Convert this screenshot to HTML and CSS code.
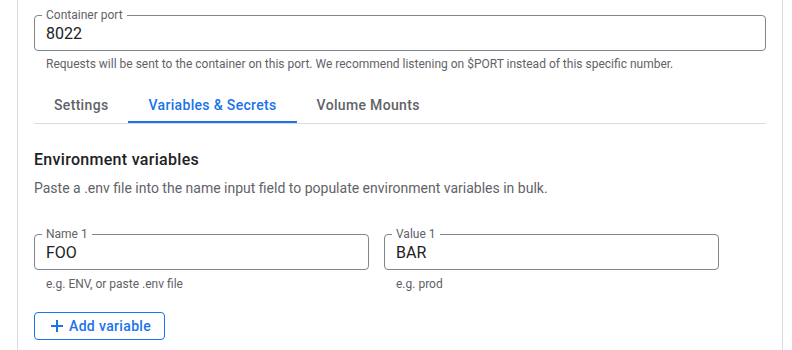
FILE: index.html
```html
<!DOCTYPE html>
<html>
<head>
<meta charset="utf-8">
<link rel="stylesheet" href="styles.css">
</head>
<body>
<div class="panel">
  <div class="field field-port">
    <span class="field-label">Container port</span>
    <span class="field-value">8022</span>
  </div>
  <div class="hint">Requests will be sent to the container on this port. We recommend listening on $PORT instead of this specific number.</div>

  <div class="tabs">
    <div class="tab">Settings</div>
    <div class="tab active">Variables &amp; Secrets</div>
    <div class="tab">Volume Mounts</div>
  </div>

  <h2 class="section-title">Environment variables</h2>
  <p class="section-desc">Paste a .env file into the name input field to populate environment variables in bulk.</p>

  <div class="env-row">
    <div class="env-col">
      <div class="field">
        <span class="field-label">Name 1</span>
        <span class="field-value">FOO</span>
      </div>
      <div class="hint">e.g. ENV, or paste .env file</div>
    </div>
    <div class="env-col">
      <div class="field">
        <span class="field-label">Value 1</span>
        <span class="field-value">BAR</span>
      </div>
      <div class="hint">e.g. prod</div>
    </div>
  </div>

  <button class="add-btn">
    <svg width="12" height="12" viewBox="0 0 12 12" aria-hidden="true"><path d="M6 0v12M0 6h12" stroke="#1a73e8" stroke-width="2" fill="none"/></svg>
    <span>Add variable</span>
  </button>
</div>
</body>
</html>
```

FILE: styles.css
```css
html, body {
  margin: 0;
  padding: 0;
  background: #fff;
  font-family: Roboto, "Liberation Sans", Arial, sans-serif;
  color: #202124;
}

.panel {
  box-sizing: border-box;
  margin-left: 17px;
  width: 766px;
  min-height: 350px;
  border-left: 1px solid #dadce0;
  border-right: 1px solid #dadce0;
  padding: 15px 16px 0 16px;
}

.field {
  position: relative;
  box-sizing: border-box;
  height: 36px;
  border: 1px solid #80868b;
  border-radius: 4px;
  display: flex;
  align-items: center;
  padding: 2px 11px 0 11px;
}

.field-label {
  position: absolute;
  left: 7px;
  top: -9px;
  padding: 0 4px;
  background: #fff;
  font-size: 12px;
  line-height: 16px;
  color: #5f6368;
}

.field-value {
  font-size: 16px;
  line-height: 20px;
  color: #202124;
}

.hint {
  margin-top: 5px;
  padding-left: 12px;
  font-size: 12px;
  line-height: 16px;
  color: #5f6368;
}

.tabs {
  display: flex;
  margin-top: 15px;
  border-bottom: 1px solid #dadce0;
}

.tab {
  box-sizing: border-box;
  height: 36px;
  padding: 8px 20px 0 20px;
  font-size: 14px;
  font-weight: 500;
  line-height: 20px;
  color: #5f6368;
  border-bottom: 2px solid transparent;
  letter-spacing: 0.33px;
}

.tab.active {
  color: #1a73e8;
  border-bottom-color: #1a73e8;
}

.section-title {
  margin: 24px 0 0 0;
  font-size: 16px;
  font-weight: 500;
  line-height: 24px;
  letter-spacing: 0.3px;
  color: #202124;
}

.section-desc {
  margin: 6px 0 0 0;
  font-size: 14px;
  line-height: 20px;
  color: #5f6368;
}

.env-row {
  display: flex;
  gap: 15px;
  margin-top: 36px;
}

.env-col {
  width: 335px;
}

.env-col .hint {
  margin-top: 6px;
}

.add-btn {
  margin-top: 20px;
  box-sizing: border-box;
  height: 28px;
  width: 131px;
  display: flex;
  align-items: center;
  gap: 6px;
  padding: 0 0 0 16px;
  border: 1px solid #1a73e8;
  border-radius: 4px;
  background: #fff;
  font-family: Roboto, "Liberation Sans", Arial, sans-serif;
  font-size: 14px;
  font-weight: 500;
  letter-spacing: 0.35px;
  color: #1a73e8;
  cursor: pointer;
}

.add-btn svg {
  flex: none;
}
```
